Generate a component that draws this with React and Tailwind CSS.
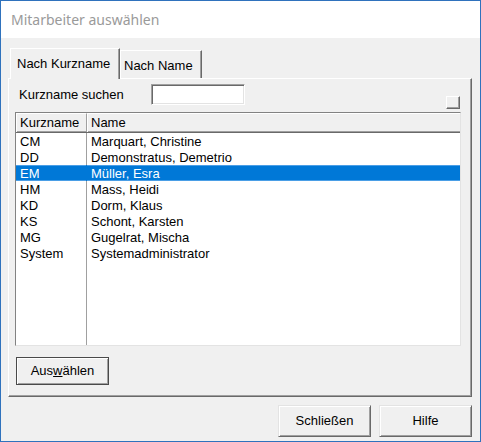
const rows = [
  ['CM', 'Marquart, Christine'],
  ['DD', 'Demonstratus, Demetrio'],
  ['EM', 'Müller, Esra'],
  ['HM', 'Mass, Heidi'],
  ['KD', 'Dorm, Klaus'],
  ['KS', 'Schont, Karsten'],
  ['MG', 'Gugelrat, Mischa'],
  ['System', 'Systemadministrator'],
];

const selected = 'EM';

function ClassicButton({ children, isDefault, className = '' }) {
  return (
    <button
      type="button"
      className={`flex items-center justify-center bg-[#f0f0f0] text-[13px] text-black ${
        isDefault
          ? 'border border-[#4a4a4a] shadow-[inset_1px_1px_0_#ffffff,inset_-1px_-1px_0_#a0a0a0]'
          : 'border border-t-[#e3e3e3] border-l-[#e3e3e3] border-r-[#696969] border-b-[#696969] shadow-[inset_1px_1px_0_#ffffff,inset_-1px_-1px_0_#a0a0a0]'
      } ${className}`}
    >
      {children}
    </button>
  );
}

export default function App() {
  return (
    <div
      className="flex h-[442px] w-[481px] flex-col border border-[#2f72bd] bg-[#f0f0f0] text-[13px] text-black"
      style={{ fontFamily: '"Liberation Sans", Arial, sans-serif' }}
    >
      <div
        className="flex h-[37px] shrink-0 items-center bg-white pl-[10px] text-[14px] text-[#9a9a9a]"
        style={{ fontFamily: '"Noto Sans", "Open Sans", sans-serif' }}
      >
        Mitarbeiter auswählen
      </div>

      <div className="flex flex-1 flex-col pl-[7px] pr-[8px] pt-[10px]">
        {/* tabs */}
        <div className="flex h-[30px] items-end pl-[2px]">
          <div className="relative z-10 -mb-px flex h-[31px] w-[110px] items-start border-l border-t border-r border-l-white border-t-white border-r-[#696969] bg-[#f0f0f0] pl-[6px] pt-[5px] shadow-[inset_-1px_0_0_#a0a0a0]">
            Nach Kurzname
          </div>
          <div className="flex h-[28px] w-[82px] items-start border-l border-t border-r border-l-white border-t-white border-r-[#696969] bg-[#f0f0f0] pl-[3px] pt-[5px] shadow-[inset_-1px_0_0_#a0a0a0]">
            Nach Name
          </div>
        </div>

        {/* panel */}
        <div className="flex h-[319px] w-[464px] flex-col border border-l-white border-t-white border-r-[#696969] border-b-[#696969] shadow-[inset_-1px_-1px_0_#a0a0a0]">
          <div className="mt-[5px] flex h-[25px] items-start pl-[10px] pr-[11px]">
            <span className="w-[132px] pt-[3px] leading-[16px]">Kurzname suchen</span>
            <div className="h-[21px] w-[94px] border border-t-[#a0a0a0] border-l-[#a0a0a0] border-r-white border-b-white bg-white shadow-[inset_1px_1px_0_#696969,inset_-1px_-1px_0_#e3e3e3]" />
            <div className="ml-auto mt-[12px] h-[13px] w-[14px] border border-t-white border-l-white border-r-[#696969] border-b-[#696969] shadow-[inset_-1px_-1px_0_#a0a0a0]" />
          </div>

          {/* list */}
          <div className="ml-[6px] mt-[3px] flex h-[234px] w-[446px] flex-col border border-t-[#828282] border-l-[#828282] border-r-[#e3e3e3] border-b-[#e3e3e3] bg-white">
            <div className="flex h-[20px] shrink-0 border-b border-[#696969] bg-[#f0f0f0] leading-[18px] shadow-[inset_0_-1px_0_#a0a0a0]">
              <div className="w-[71px] border-l border-t border-r border-l-white border-t-white border-r-[#a0a0a0] pl-[3px]">
                Kurzname
              </div>
              <div className="flex-1 border-l border-t border-l-white border-t-white pl-[3px]">
                Name
              </div>
            </div>
            <div className="flex flex-1 flex-col">
              {rows.map(([k, n]) => {
                const sel = k === selected;
                return (
                  <div
                    key={k}
                    className={`flex h-[16px] leading-[17px] ${
                      sel ? 'bg-[#0078d7] text-white shadow-[inset_0_1px_0_#4a9ee6,inset_0_-1px_0_#4a9ee6]' : ''
                    }`}
                  >
                    <div
                      className={`w-[71px] border-r pl-[4px] ${
                        sel ? 'border-[#0078d7]' : 'border-[#a0a0a0]'
                      }`}
                    >
                      {k}
                    </div>
                    <div className="flex-1 pl-[4px]">{n}</div>
                  </div>
                );
              })}
              <div className="flex flex-1">
                <div className="w-[71px] border-r border-[#a0a0a0]" />
              </div>
            </div>
          </div>

          <ClassicButton isDefault className="ml-[7px] mt-[11px] h-[28px] w-[93px]">
            <span>
              Aus<span className="underline">w</span>ählen
            </span>
          </ClassicButton>
        </div>

        {/* bottom buttons */}
        <div className="mt-[8px] flex justify-end gap-[8px]">
          <ClassicButton className="h-[32px] w-[93px]">Schließen</ClassicButton>
          <ClassicButton className="h-[32px] w-[93px]">Hilfe</ClassicButton>
        </div>
      </div>
    </div>
  );
}
